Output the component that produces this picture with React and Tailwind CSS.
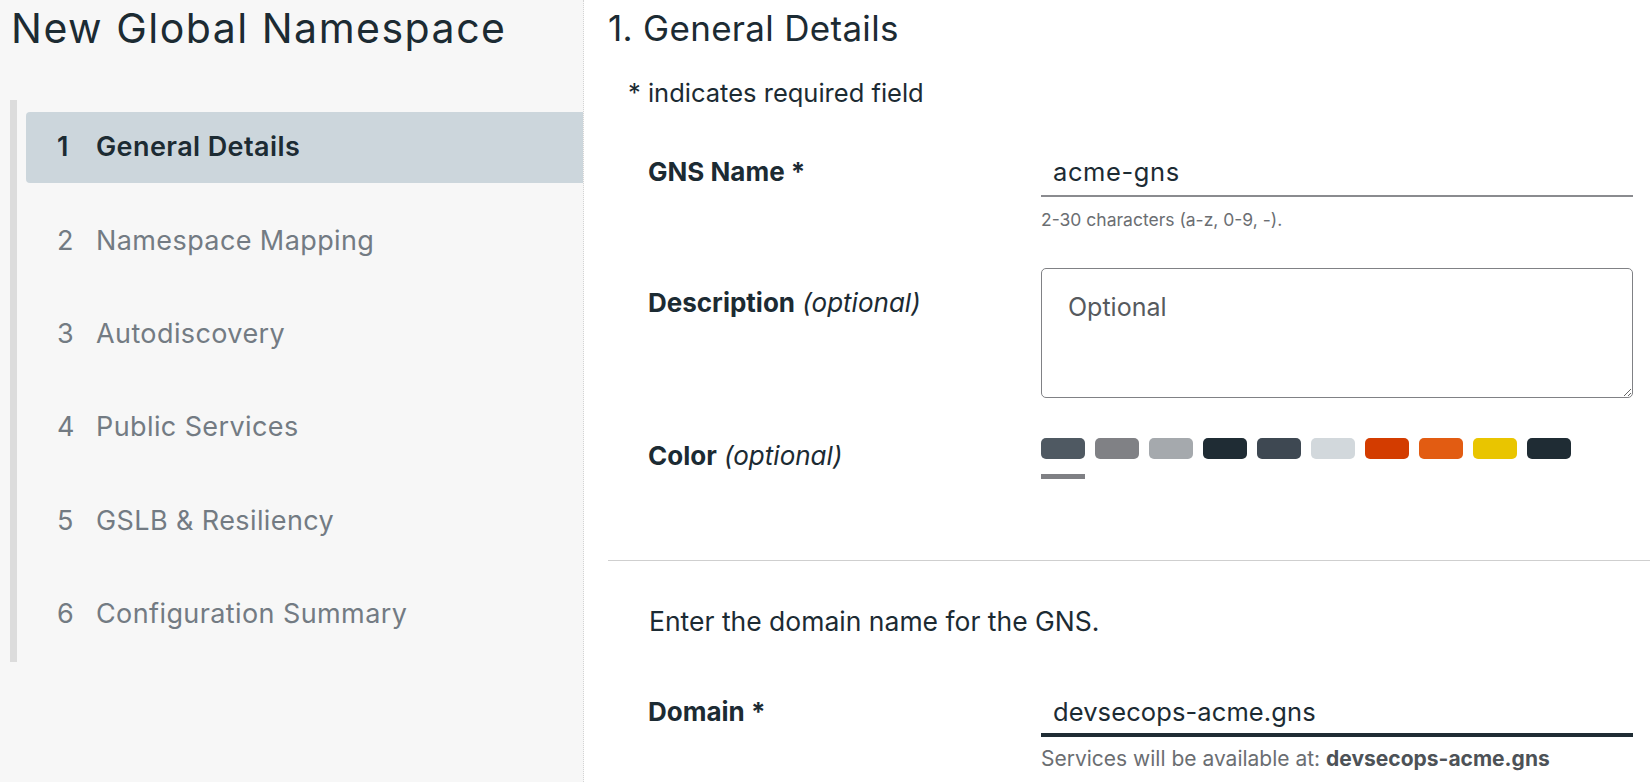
import React from "react";

const STEPS = [
  { n: 1, label: "General Details", active: true },
  { n: 2, label: "Namespace Mapping" },
  { n: 3, label: "Autodiscovery" },
  { n: 4, label: "Public Services" },
  { n: 5, label: "GSLB & Resiliency" },
  { n: 6, label: "Configuration Summary" },
];

const SWATCHES = [
  "bg-[#4f5962]",
  "bg-[#808185]",
  "bg-[#a5a9ad]",
  "bg-[#1f2c34]",
  "bg-[#3e4852]",
  "bg-[#d2d8dc]",
  "bg-[#d33c00]",
  "bg-[#e25c12]",
  "bg-[#e9c500]",
  "bg-[#1f2c34]",
];

function Sidebar() {
  return (
    <aside className="w-[584px] shrink-0 bg-[#f7f7f7] border-r border-dotted border-[#d4d4d4] flex flex-col">
      <div className="h-[56px] flex items-center pl-[11px]">
        <h1 className="text-[41px] leading-none tracking-[1.5px] text-[#1c2b33] font-normal">New Global Namespace</h1>
      </div>

      {/* wizard steps */}
      <nav className="mt-[44px] ml-[10px] border-l-[7px] border-[#dcdcdc] py-[12px] pl-[9px] flex flex-col gap-[22.4px]">
        {STEPS.map((s) => (
          <div
            key={s.n}
            className={
              s.active
                ? "h-[71px] flex items-center pl-[31px] rounded-l-[4px] bg-[#ccd6dc] text-[#1c2b33] font-semibold"
                : "h-[71px] flex items-center pl-[31px] text-[#737b83]"
            }
          >
            <span className="w-[39px] text-[27px]">{s.n}</span>
            <span className="text-[27px] tracking-[0.4px]">{s.label}</span>
          </div>
        ))}
      </nav>
    </aside>
  );
}

function Row({ label, optional, children, labelClass = "" }) {
  return (
    <div className="flex pl-[40px] pr-[17px]">
      <div className={"w-[393px] shrink-0 text-[26px] text-[#1c2b33] " + labelClass}>
        <span className="font-bold">{label}</span>
        {optional && <span className="italic font-normal"> (optional)</span>}
      </div>
      <div className="flex-1">{children}</div>
    </div>
  );
}

export default function App() {
  return (
    <div className="flex h-[782px] w-full overflow-hidden bg-white font-['Inter',sans-serif]">
      <Sidebar />

      <main className="flex-1 pl-[24px] flex flex-col">
        <div className="h-[56px] flex items-center">
          <h2 className="text-[35px] leading-none tracking-[0.3px] text-[#1c2b33]">1. General Details</h2>
        </div>
        <div className="h-[74px] flex items-center pl-[20px] text-[25.5px] text-[#1c2b33]">
          * indicates required field
        </div>

        {/* GNS name */}
        <div className="pt-[16px]">
          <Row label="GNS Name *" labelClass="h-[50px] flex items-center">
            <div className="h-[51px] border-b-2 border-[#8a8b8f] flex items-center pt-[4px] pl-[12px] text-[25.5px] tracking-[0.6px] text-[#1c2b33]">
              acme-gns
            </div>
            <div className="mt-[11px] h-[24px] flex items-center text-[17.5px] text-[#6b6e72]">
              2-30 characters (a-z, 0-9, -).
            </div>
          </Row>
        </div>

        {/* description */}
        <div className="mt-[36px]">
          <Row label="Description" optional labelClass="mt-[20px] h-[30px] leading-[30px]">
            <textarea
              placeholder="Optional"
              className="block w-full h-[130px] rounded-[5px] border-[1.5px] border-[#808185] px-[26px] py-[23px] text-[25px] leading-[30px] text-[#1c2b33] placeholder:text-[#565a5e] outline-none"
            />
          </Row>
        </div>

        {/* color */}
        <div className="mt-[40px]">
          <Row label="Color" optional labelClass="mt-[3px] h-[30px] leading-[30px]">
            <div className="flex gap-[10px]">
              {SWATCHES.map((c, i) => (
                <div key={i} className={"w-[44px] h-[21px] rounded-[5px] " + c} />
              ))}
            </div>
            <div className="mt-[15px] w-[44px] h-[5px] bg-[#7f8084]" />
          </Row>
        </div>

        <div className="mt-[81px] h-px bg-[#cfcfcf]" />

        <div className="mt-[46px] h-[30px] flex items-center pl-[41px] text-[26.5px] text-[#1c2b33]">
          Enter the domain name for the GNS.
        </div>

        {/* domain */}
        <div className="mt-[49px]">
          <Row label="Domain *" labelClass="h-[50px] flex items-center">
            <div className="h-[51px] border-b-4 border-[#1f2c34] flex items-center pt-[5px] pl-[12px] text-[25.5px] tracking-[0.1px] text-[#1c2b33]">
              devsecops-acme.gns
            </div>
            <div className="mt-[10px] h-[24px] flex items-center text-[21px] text-[#6b6e72]">
              Services will be available at:&nbsp;<span className="font-bold text-[#4d5257]">devsecops-acme.gns</span>
            </div>
          </Row>
        </div>
      </main>
    </div>
  );
}
